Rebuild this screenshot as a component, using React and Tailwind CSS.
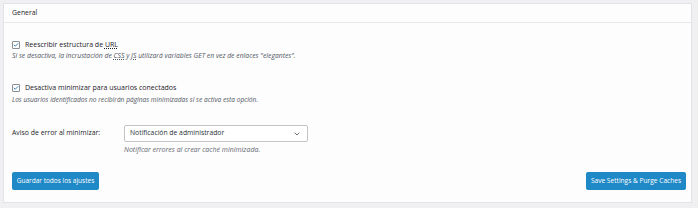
import { Check, ChevronDown } from "lucide-react";

function Checkbox() {
  return (
    <span className="flex h-[8px] w-[8px] shrink-0 items-center justify-center rounded-[1px] border border-[#8c8f94] bg-white">
      <Check size={8} strokeWidth={3.5} className="text-[#2271b1]" />
    </span>
  );
}

export default function App() {
  return (
    <div className="h-[208px] w-[698px] bg-[#f0eff2] pl-[3px] pt-[3px] font-['Open_Sans','Noto_Sans',sans-serif]">
      <div className="h-[200px] w-[689px] border border-[#e3e2e6] bg-[#fefdfe]">
        {/* ---- En-tête ---- */}
        <div className="flex h-[19px] items-center border-b border-[#e8e7ea] px-[8px] text-[6.9px] text-[#1d2327]">
          General
        </div>

        <div className="pl-[8px] pr-[5px] pt-[17px]">
          {/* ---- URL ---- */}
          <div className="flex h-[10px] items-center gap-[5px] text-[7px] leading-[10px] text-[#1d2327]">
            <Checkbox />
            <span>
              Reescribir estructura de{" "}
              <span className="underline decoration-dotted underline-offset-1">URL</span>
            </span>
          </div>
          <p className="mt-[1px] h-[10px] text-[6.8px] leading-[10px] italic text-[#50575e]">
            Si se desactiva, la incrustación de{" "}
            <span className="underline decoration-dotted">CSS</span> y{" "}
            <span className="underline decoration-dotted">JS</span> utilizará variables GET en vez de enlaces "elegantes".
          </p>

          {/* ---- Utilisateurs connectés ---- */}
          <div className="mt-[22px] flex h-[10px] items-center gap-[5px] text-[7px] leading-[10px] text-[#1d2327]">
            <Checkbox />
            <span>Desactiva minimizar para usuarios conectados</span>
          </div>
          <p className="mt-[2px] h-[10px] text-[6.6px] leading-[10px] italic text-[#50575e]">
            Los usuarios identificados no recibirán páginas minimizadas si se activa esta opción.
          </p>

          {/* ---- Aviso de error ---- */}
          <div className="mt-[20px] flex items-start">
            <div className="flex h-[17px] w-[112px] items-center text-[6.9px] text-[#1d2327]">
              Aviso de error al minimizar:
            </div>
            <div>
              <div className="flex h-[17px] w-[184px] items-center justify-between rounded-[2px] border border-[#c3c4c7] bg-white pl-[5px] pr-[6px] text-[6.8px] text-[#2c3338]">
                <span>Notificación de administrador</span>
                <ChevronDown size={8} strokeWidth={2.5} className="text-[#50575e]" />
              </div>
              <p className="mt-[3px] h-[10px] text-[7px] leading-[10px] italic text-[#646970]">
                Notificar errores al crear caché minimizada.
              </p>
            </div>
          </div>

          {/* ---- Boutons ---- */}
          <div className="mt-[17px] flex items-center justify-between">
            <button className="flex h-[18px] w-[87px] items-center justify-center rounded-[2px] bg-[#1f89c7] text-[6.5px] text-white">
              Guardar todos los ajustes
            </button>
            <button className="flex h-[18px] w-[100px] items-center justify-center rounded-[2px] bg-[#1f89c7] text-[6.6px] text-white">
              Save Settings &amp; Purge Caches
            </button>
          </div>
        </div>
      </div>
    </div>
  );
}
